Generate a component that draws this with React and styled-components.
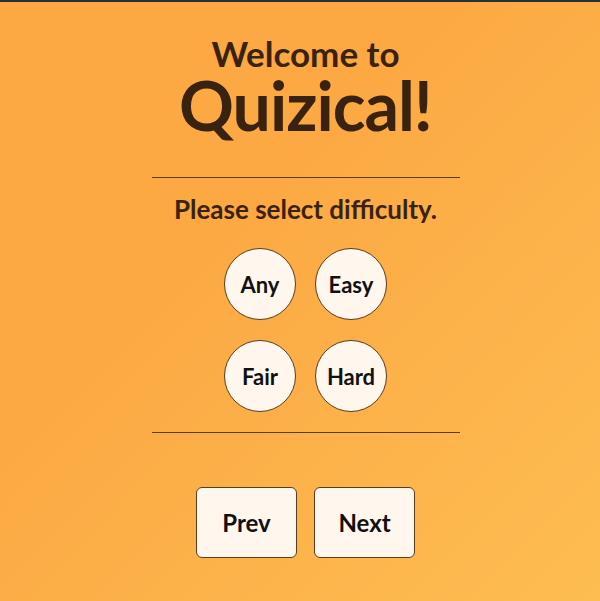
import React, { useState } from "react";
import styled, { createGlobalStyle } from "styled-components";

const TEXT_BROWN = "#3a2210";
const CREAM = "#fff6ee";
const EDGE = "#5b3c1e";

const GlobalStyle = createGlobalStyle`
  html, body {
    margin: 0;
    padding: 0;
  }
  body {
    font-family: "Lato", "Noto Sans", sans-serif;
  }
`;

const Page = styled.div`
  box-sizing: border-box;
  height: 601px;
  padding-left: 11px;
  border-top: 2px solid #2b2f36;
  background: linear-gradient(135deg, #fca843 0%, #fca843 35%, #fdbd51 100%);
  display: flex;
  flex-direction: column;
  align-items: center;
`;

const Column = styled.div`
  width: 308px;
  display: flex;
  flex-direction: column;
  align-items: center;
`;

const Welcome = styled.h2`
  margin: 31px 0 0;
  font-size: 35px;
  font-weight: 700;
  line-height: 40px;
  color: ${TEXT_BROWN};
`;

const Title = styled.h1`
  margin: 0;
  font-size: 68px;
  font-weight: 700;
  line-height: 64px;
  letter-spacing: -1px;
  color: ${TEXT_BROWN};
`;

const Divider = styled.hr`
  width: 100%;
  margin: ${(p) => p.$top}px 0 0;
  border: none;
  border-top: 1px solid ${EDGE};
`;

const Prompt = styled.p`
  margin: 16px 0 0;
  font-size: 26px;
  font-weight: 700;
  line-height: 30px;
  color: ${TEXT_BROWN};
`;

const Grid = styled.div`
  margin-top: 24px;
  display: grid;
  grid-template-columns: repeat(2, 72px);
  gap: 20px 19px;
`;

const Circle = styled.button`
  box-sizing: border-box;
  width: 72px;
  height: 72px;
  border-radius: 50%;
  border: 1px solid ${EDGE};
  background: ${(p) => (p.$active ? "#ffe2bd" : CREAM)};
  font-family: inherit;
  font-size: 22px;
  font-weight: 700;
  color: #111;
  padding: 0;
  cursor: pointer;
`;

const NavRow = styled.div`
  margin-top: 54px;
  display: flex;
  gap: 17px;
`;

const NavButton = styled.button`
  box-sizing: border-box;
  width: 101px;
  height: 71px;
  border-radius: 6px;
  border: 1px solid ${EDGE};
  background: ${CREAM};
  font-family: inherit;
  font-size: 24px;
  font-weight: 700;
  color: #111;
  cursor: pointer;
`;

const levels = ["Any", "Easy", "Fair", "Hard"];

export default function App() {
  const [level, setLevel] = useState(null);
  return (
    <>
      <GlobalStyle />
      <Page>
        <Column>
          <Welcome>Welcome to</Welcome>
          <Title>Quizical!</Title>
          <Divider $top={40} />
          <Prompt>Please select difficulty.</Prompt>
          <Grid>
            {levels.map((l) => (
              <Circle key={l} $active={level === l} onClick={() => setLevel(l)}>
                {l}
              </Circle>
            ))}
          </Grid>
          <Divider $top={20} />
          <NavRow>
            <NavButton>Prev</NavButton>
            <NavButton>Next</NavButton>
          </NavRow>
        </Column>
      </Page>
    </>
  );
}
